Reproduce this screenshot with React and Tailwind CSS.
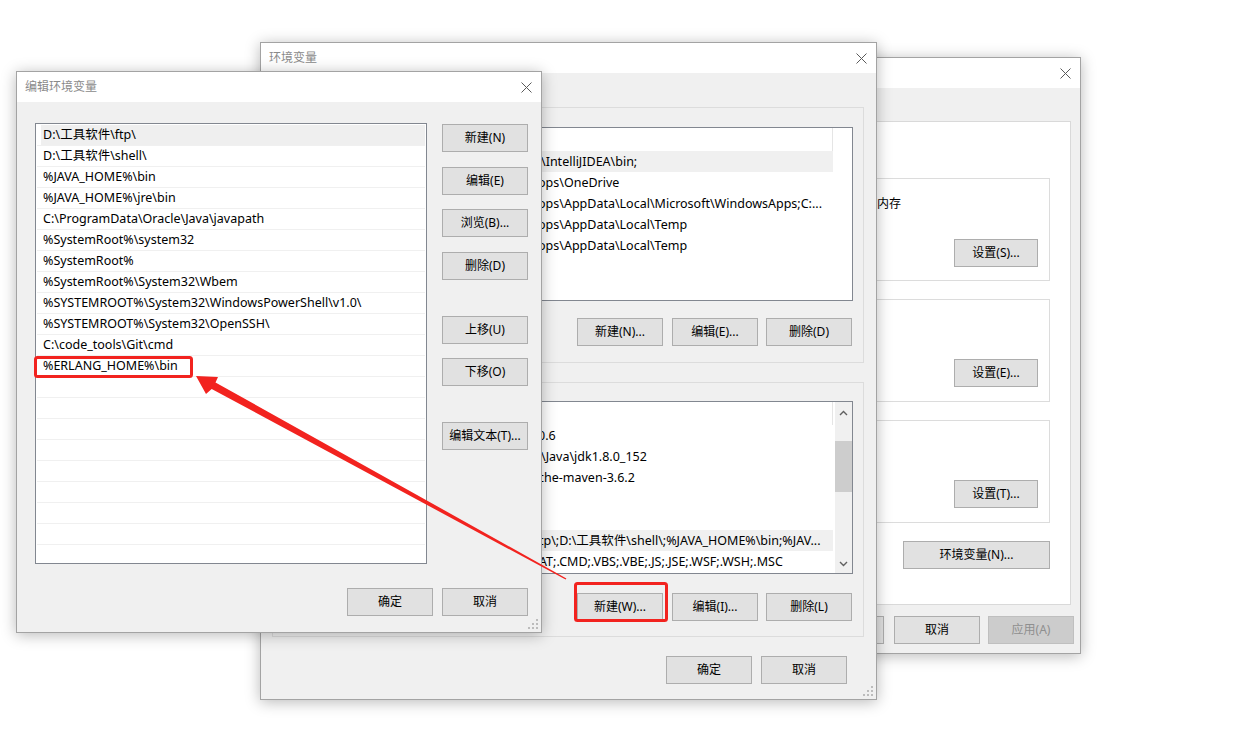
import React from "react";

const CloseX = () => (
  <svg width="11" height="11" viewBox="0 0 11 11">
    <path d="M0.5 0.5L10.5 10.5M10.5 0.5L0.5 10.5" stroke="#5a5a5a" strokeWidth="1" />
  </svg>
);

const Grip = () => (
  <svg className="absolute right-[3px] bottom-[3px]" width="10" height="10" viewBox="0 0 10 10">
    {[
      [8, 0],
      [4, 4],
      [8, 4],
      [0, 8],
      [4, 8],
      [8, 8],
    ].map(([x, y], i) => (
      <rect key={i} x={x} y={y} width="2" height="2" fill="#bcbcbc" />
    ))}
  </svg>
);

function Btn({ children, className = "", disabled = false }) {
  return (
    <div
      className={`h-[28px] shrink-0 border flex items-center justify-center text-[12px] ${
        disabled
          ? "border-[#bfbfbf] bg-[#cccccc] text-[#8f8f8f]"
          : "border-[#adadad] bg-[#e1e1e1] text-black"
      } ${className}`}
    >
      {children}
    </div>
  );
}

function Win({ className, title, children }) {
  return (
    <div
      className={`absolute flex flex-col border border-[#a3a3a3] bg-[#f0f0f0] shadow-[0_2px_14px_rgba(0,0,0,0.28)] ${className}`}
    >
      <div className="h-[30px] shrink-0 bg-white flex items-center justify-between pl-[8px] pr-[9px]">
        <span className="text-[12px] text-[#8a8a8a]">{title}</span>
        <CloseX />
      </div>
      {children}
    </div>
  );
}

const editRows = [
  "D:\\工具软件\\ftp\\",
  "D:\\工具软件\\shell\\",
  "%JAVA_HOME%\\bin",
  "%JAVA_HOME%\\jre\\bin",
  "C:\\ProgramData\\Oracle\\Java\\javapath",
  "%SystemRoot%\\system32",
  "%SystemRoot%",
  "%SystemRoot%\\System32\\Wbem",
  "%SYSTEMROOT%\\System32\\WindowsPowerShell\\v1.0\\",
  "%SYSTEMROOT%\\System32\\OpenSSH\\",
  "C:\\code_tools\\Git\\cmd",
  "%ERLANG_HOME%\\bin",
  "", "", "", "", "", "", "", "",
];

const userRows = [
  { v: "\\IntelliJIDEA\\bin;", pad: "pl-[3px]", sel: true },
  { v: "ops\\OneDrive", pad: "pl-[0px]" },
  { v: "ops\\AppData\\Local\\Microsoft\\WindowsApps;C:...", pad: "pl-[0px]" },
  { v: "ops\\AppData\\Local\\Temp", pad: "pl-[0px]" },
  { v: "ops\\AppData\\Local\\Temp", pad: "pl-[0px]" },
];

const sysRows = [
  { v: "0.6", pad: "pl-[0px]" },
  { v: "\\Java\\jdk1.8.0_152", pad: "pl-[3px]" },
  { v: "che-maven-3.6.2", pad: "pl-[0px]" },
  { v: "", pad: "" },
  { v: "", pad: "" },
  { v: "tp\\;D:\\工具软件\\shell\\;%JAVA_HOME%\\bin;%JAV...", pad: "pl-[1px]", sel: true },
  { v: "AT;.CMD;.VBS;.VBE;.JS;.JSE;.WSF;.WSH;.MSC", pad: "pl-[1px]" },
];

function VarRow({ row }) {
  return (
    <div className={`h-[21px] shrink-0 w-[549px] flex items-center pt-[1px] ${row.sel ? "bg-[#f0f0f0]" : ""}`}>
      <div className="w-[254px] shrink-0" />
      <div className={`whitespace-nowrap text-[12.5px] ${row.pad}`}>{row.v}</div>
    </div>
  );
}

function Header() {
  return <div className="h-[23px] shrink-0 w-[549px] border-r border-[#e5e5e5]" />;
}

function Chevron({ up }) {
  return (
    <svg width="9" height="6" viewBox="0 0 9 6">
      <path d={up ? "M1 5L4.5 1.5L8 5" : "M1 1L4.5 4.5L8 1"} stroke="#606060" strokeWidth="1.4" fill="none" />
    </svg>
  );
}

export default function App() {
  return (
    <div className="relative w-[1249px] h-[742px] bg-white overflow-hidden font-['Noto_Sans','Noto_Sans_CJK_SC',sans-serif] text-black">
      {/* 系统属性 */}
      <Win className="left-[598px] top-[57px] w-[483px] h-[597px]" title="系统属性">
        <div className="mx-[9px] mt-[33px] h-[484px] shrink-0 bg-white border border-[#d9d9d9] flex flex-col pl-[19px] pr-[20px] pt-[56px]">
          <div className="h-[103px] border border-[#dcdcdc] flex flex-col pl-[10px] pr-[11px] pt-[16px]">
            <div className="text-[12px] h-[18px] whitespace-nowrap pl-[214px]">虚拟内存</div>
            <div className="flex justify-end mt-[26px]">
              <Btn className="w-[84px]">设置(S)...</Btn>
            </div>
          </div>
          <div className="h-[103px] mt-[18px] border border-[#dcdcdc] flex flex-col pl-[10px] pr-[11px] pt-[59px]">
            <div className="flex justify-end">
              <Btn className="w-[84px]">设置(E)...</Btn>
            </div>
          </div>
          <div className="h-[103px] mt-[18px] border border-[#dcdcdc] flex flex-col pl-[10px] pr-[11px] pt-[59px]">
            <div className="flex justify-end">
              <Btn className="w-[84px]">设置(T)...</Btn>
            </div>
          </div>
          <div className="flex justify-end mt-[18px]">
            <Btn className="w-[147px]">环境变量(N)...</Btn>
          </div>
        </div>
        <div className="flex justify-end pr-[6px] mt-[11px]">
          <Btn className="w-[86px] mr-[10px]">确定</Btn>
          <Btn className="w-[86px] mr-[8px]">取消</Btn>
          <Btn className="w-[86px]" disabled>
            应用(A)
          </Btn>
        </div>
      </Win>

      {/* 环境变量 */}
      <Win className="left-[260px] top-[42px] w-[617px] h-[658px]" title="环境变量">
        <div className="flex flex-col pl-[11px] pr-[12px] pt-[34px]">
          <div className="h-[256px] border border-[#dcdcdc] flex flex-col px-[10px] pt-[19px]">
            <div className="h-[174px] border border-[#828790] bg-white flex flex-col">
              <Header />
              {userRows.map((r, i) => (
                <VarRow key={i} row={r} />
              ))}
            </div>
            <div className="flex justify-end mt-[17px] mr-[1px]">
              <Btn className="w-[86px] mr-[9px]">新建(N)...</Btn>
              <Btn className="w-[86px] mr-[8px]">编辑(E)...</Btn>
              <Btn className="w-[86px]">删除(D)</Btn>
            </div>
          </div>
          <div className="h-[255px] mt-[19px] border border-[#dcdcdc] flex flex-col px-[10px] pt-[18px]">
            <div className="h-[173px] border border-[#828790] bg-white flex">
              <div className="flex flex-col">
                <Header />
                {sysRows.map((r, i) => (
                  <VarRow key={i} row={r} />
                ))}
              </div>
              <div className="ml-auto w-[17px] bg-[#f0f0f0] flex flex-col items-center">
                <div className="h-[17px] flex items-center justify-center mt-[2px]">
                  <Chevron up />
                </div>
                <div className="w-[17px] h-[51px] bg-[#cdcdcd] mt-[20px]" />
                <div className="mt-auto h-[17px] flex items-center justify-center mb-[1px]">
                  <Chevron />
                </div>
              </div>
            </div>
            <div className="flex justify-end mt-[19px] mr-[1px]">
              <Btn className="w-[86px] mr-[9px]">新建(W)...</Btn>
              <Btn className="w-[86px] mr-[8px]">编辑(I)...</Btn>
              <Btn className="w-[86px]">删除(L)</Btn>
            </div>
          </div>
          <div className="flex justify-end gap-[9px] pr-[17px] mt-[19px]">
            <Btn className="w-[86px]">确定</Btn>
            <Btn className="w-[86px]">取消</Btn>
          </div>
        </div>
        <Grip />
      </Win>

      {/* 编辑环境变量 */}
      <Win className="left-[16px] top-[71px] w-[526px] h-[562px]" title="编辑环境变量">
        <div className="flex pl-[18px] pt-[21px]">
          <div className="w-[392px] h-[441px] border border-[#828790] bg-white px-[1px] pt-[1px]">
            {editRows.map((t, i) => (
              <div key={i} className="h-[21px] border-b border-[#f0f0f0] flex">
                <div
                  className={`ml-[4px] flex-1 flex items-center pl-[2px] pt-[1px] text-[12.5px] whitespace-nowrap ${
                    i === 0 ? "bg-[#efefef]" : ""
                  }`}
                >
                  {t}
                </div>
              </div>
            ))}
          </div>
          <div className="ml-[15px] flex flex-col">
            <Btn className="w-[86px] mt-[1px]">新建(N)</Btn>
            <Btn className="w-[86px] mt-[15px]">编辑(E)</Btn>
            <Btn className="w-[86px] mt-[14px]">浏览(B)...</Btn>
            <Btn className="w-[86px] mt-[15px]">删除(D)</Btn>
            <Btn className="w-[86px] mt-[36px]">上移(U)</Btn>
            <Btn className="w-[86px] mt-[14px]">下移(O)</Btn>
            <Btn className="w-[86px] mt-[36px]">编辑文本(T)...</Btn>
          </div>
        </div>
        <div className="flex justify-end gap-[9px] pr-[13px] mt-[24px]">
          <Btn className="w-[86px]">确定</Btn>
          <Btn className="w-[86px]">取消</Btn>
        </div>
        <Grip />
      </Win>

      {/* 标注 */}
      <svg className="absolute inset-0 pointer-events-none" width="1249" height="742" viewBox="0 0 1249 742">
        <rect x="35.5" y="357.5" width="156" height="19" rx="2" fill="none" stroke="#f2231f" strokeWidth="3" />
        <rect x="575.5" y="583.5" width="91" height="37" rx="2" fill="none" stroke="#f2231f" strokeWidth="3" />
        <polygon
          points="196,376 218,377 215.5,382.5 566.4,578.4 565.6,579.6 211.7,389 206,394"
          fill="#f2231f"
        />
      </svg>
    </div>
  );
}
